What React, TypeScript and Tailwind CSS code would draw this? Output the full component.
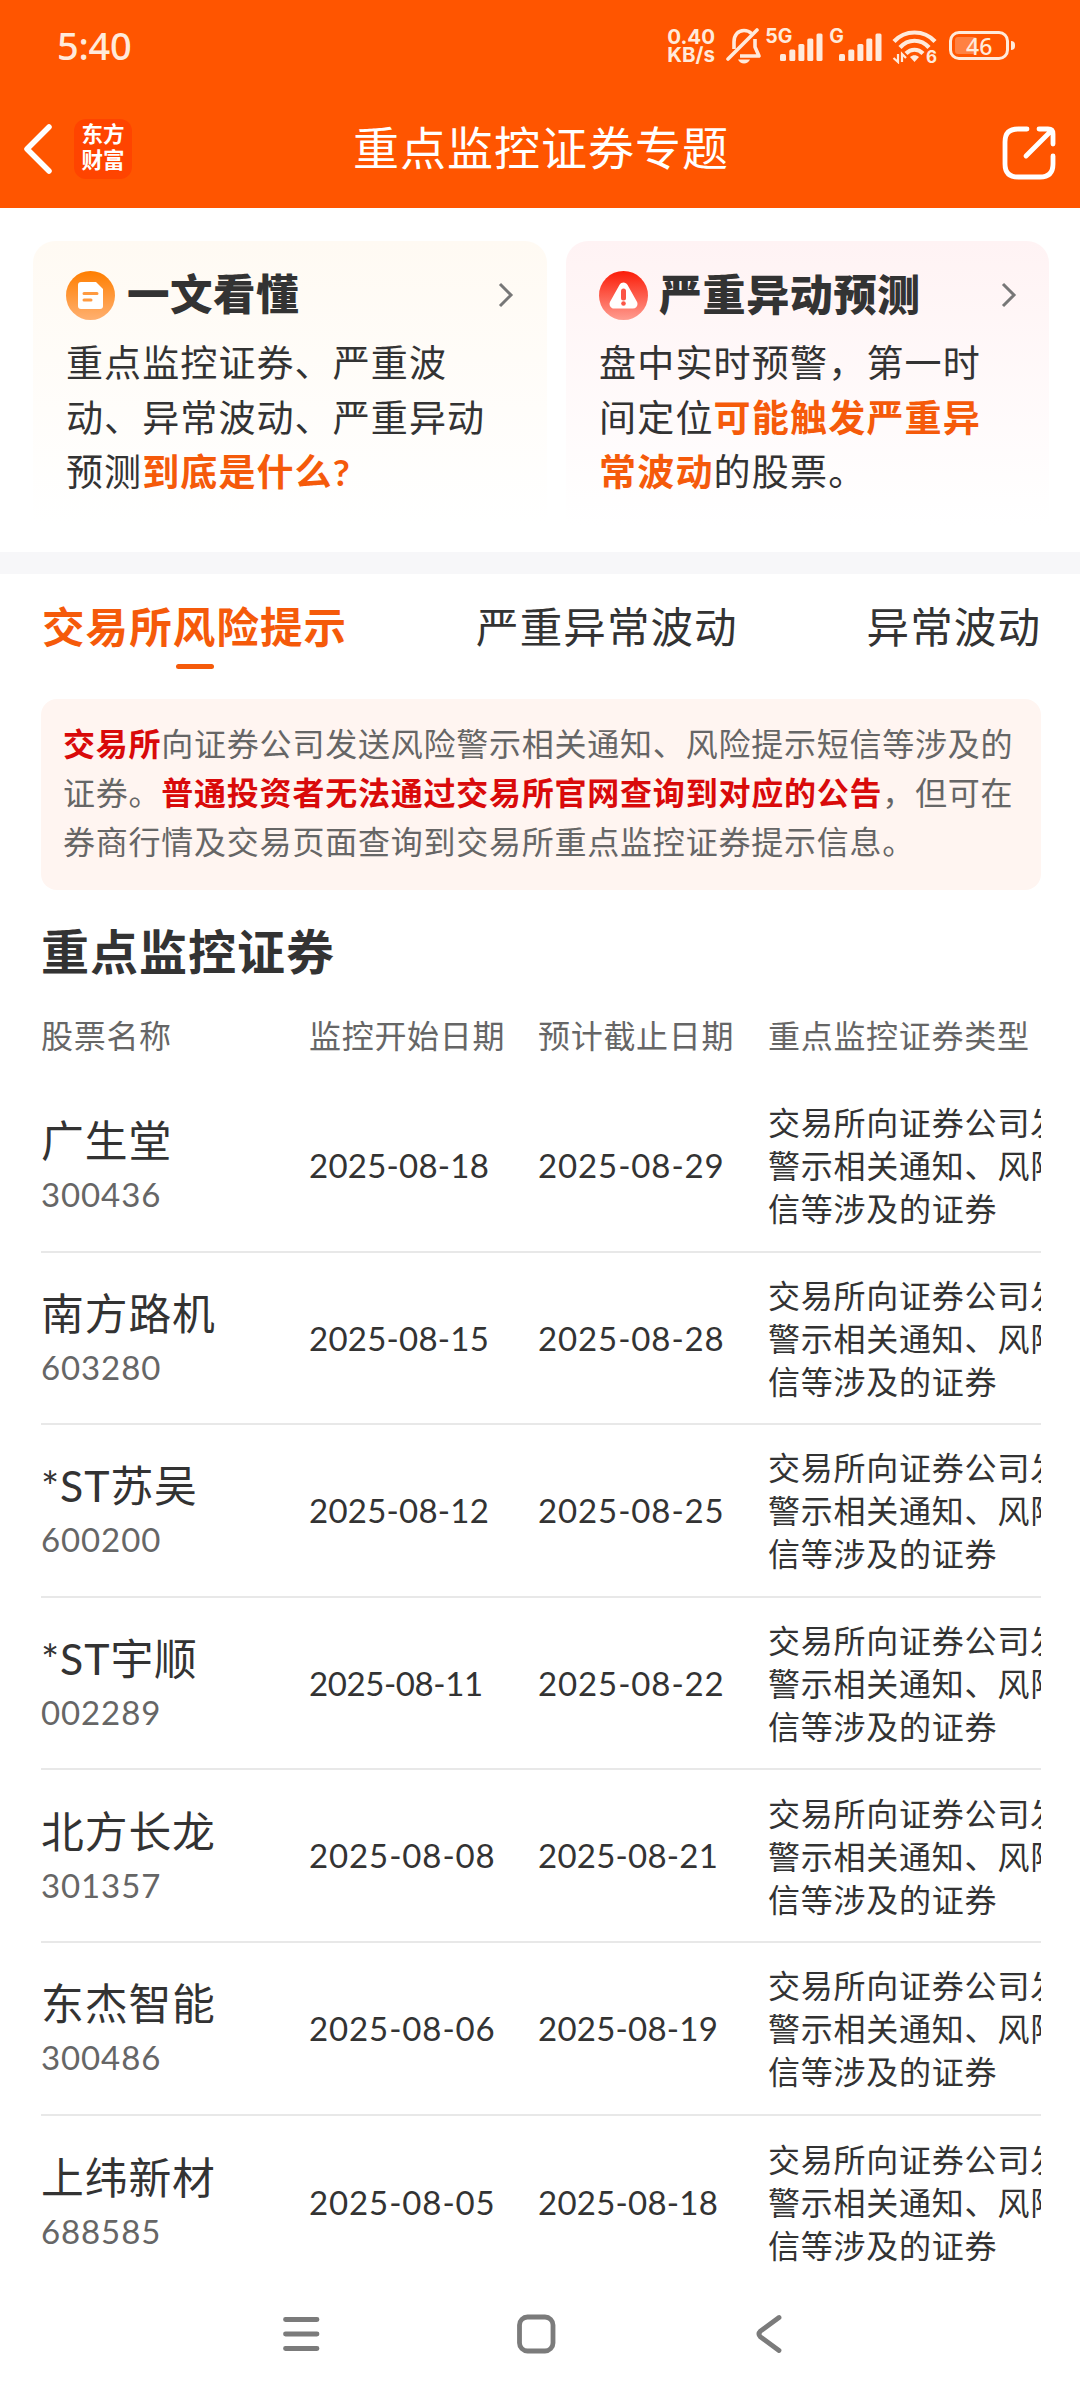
const LONG_TYPE = "交易所向证券公司发送风险警示相关通知、风险提示短信等涉及的证券";

const stocks = [
  { name: "广生堂", code: "300436", start: "2025-08-18", end: "2025-08-29" },
  { name: "南方路机", code: "603280", start: "2025-08-15", end: "2025-08-28" },
  { name: "*ST苏吴", code: "600200", start: "2025-08-12", end: "2025-08-25" },
  { name: "*ST宇顺", code: "002289", start: "2025-08-11", end: "2025-08-22" },
  { name: "北方长龙", code: "301357", start: "2025-08-08", end: "2025-08-21" },
  { name: "东杰智能", code: "300486", start: "2025-08-06", end: "2025-08-19" },
  { name: "上纬新材", code: "688585", start: "2025-08-05", end: "2025-08-18" },
];

const Signal = () => (
  <svg width="43" height="28" viewBox="0 0 43 28" fill="currentColor">
    <rect x="0" y="21" width="6" height="7" rx="1.5" />
    <rect x="9.3" y="16.5" width="6" height="11.5" rx="1.5" />
    <rect x="18.4" y="11" width="6" height="17" rx="1.5" />
    <rect x="27.3" y="5.5" width="6" height="22.5" rx="1.5" />
    <rect x="36.5" y="0.5" width="6" height="27.5" rx="1.5" />
  </svg>
);

const StatusBar = () => (
  <div className="flex h-[92px] items-center pl-[57px] pr-[65px] text-[#ffeadb]">
    <span className="-mt-[3px] font-['Noto_Sans',sans-serif] text-[38px] font-medium leading-none tracking-[-0.3px]">5:40</span>
    <div className="ml-auto flex h-[36px] items-start font-['Inter',sans-serif] font-bold">
      <div className="w-[51px] text-[20.500px] leading-[18px]">
        <p>0.40</p>
        <p>KB/s</p>
      </div>
      <svg width="36" height="36" viewBox="0 0 36 36" fill="none" stroke="currentColor" strokeWidth="3.6" className="ml-[8px]">
        <path d="M8 21V14C8 7 12 2.500 18 2.500c3 0 5.500 1 7.500 3M29 11v8l4 9H14" strokeLinejoin="round" />
        <path d="M2 31L31 2" strokeLinecap="round" />
        <path d="M12 31.500h12q-2 4-6 4t-6-4z" fill="currentColor" stroke="none" />
      </svg>
      <span className="ml-[3px] text-[19.500px] leading-[17px]">5G</span>
      <div className="-ml-[12px] mt-[5px]"><Signal /></div>
      <span className="ml-[6px] text-[19.500px] leading-[17px]">G</span>
      <div className="-ml-[5px] mt-[5px]"><Signal /></div>
      <svg width="45" height="36" viewBox="0 0 45 36" fill="none" stroke="currentColor" strokeWidth="4.200" className="ml-[10px]">
        <path d="M2 13.500C13 1.500 32 1.500 43 13.500M8 19.500c8-9 21-9 29 0M14 25.500c5-5 12-5 17 0" />
        <path d="M18 29c3-2.500 6-2.500 9 0L22.500 34z" fill="currentColor" stroke="none" />
        <path d="M6 26v8L1.500 30M10 34v-8l4 4" strokeWidth="2.200" />
        <text x="34" y="34.500" fontSize="17" fill="currentColor" stroke="none">6</text>
      </svg>
      <div className="ml-[12px] mt-[3px] flex items-center gap-[2px]">
        <div className="flex h-[29px] w-[60px] items-center rounded-[10px] border-[3px] border-current p-[3px]">
          <div className="h-full w-[22px] rounded-[3px] bg-[#ff8142]" />
          <span className="-ml-[11px] font-['Noto_Sans',sans-serif] text-[23px] font-medium leading-[24px]">46</span>
        </div>
        <div className="h-[9px] w-[4px] rounded-r-[4px] bg-current" />
      </div>
    </div>
  </div>
);

const Header = () => (
  <header className="h-[208px] shrink-0 bg-[#ff5500]">
    <StatusBar />
    <div className="flex h-[116px] items-center justify-between pb-[2px] pl-[23px] pr-[24px] text-white">
      <div className="flex w-[110px] items-center">
        <svg width="30" height="50" viewBox="0 0 30 50" fill="none" stroke="currentColor" strokeWidth="5.500">
          <path d="M26 3L4 25l22 22" strokeLinecap="round" strokeLinejoin="round" />
        </svg>
        <div className="ml-[21px] flex h-[60px] w-[58px] flex-col items-center rounded-[12px] bg-[#ff4400] pt-[3px] text-[21.500px] font-bold leading-[25.500px]">
          <span>东方</span>
          <span>财富</span>
        </div>
      </div>
      <h1 className="-mt-[3px] pl-[3px] text-[46px] leading-none tracking-[1px]">重点监控证券专题</h1>
      <div className="flex w-[110px] justify-end pt-[8px]">
        <svg width="54" height="54" viewBox="0 0 54 54" fill="none" stroke="currentColor" strokeWidth="4.800" strokeLinecap="round" strokeLinejoin="round">
          <path d="M25 3H16Q3 3 3 16v22q0 13 13 13h22q13 0 13-13V30" />
          <path d="M37 3h9q5 0 5 5v10M49 5L24 30" />
        </svg>
      </div>
    </div>
  </header>
);

const Chevron = () => (
  <svg width="16" height="26" viewBox="0 0 16 26" fill="none" stroke="#777" strokeWidth="3" className="ml-auto">
    <path d="M2 2l11 11L2 24" />
  </svg>
);

const Guides = () => (
  <section className="flex h-[344px] shrink-0 gap-[19px] pl-[33px] pr-[31px] pt-[33px] text-[#333]">
    <article className="h-[284px] w-[514px] rounded-t-[22px] bg-linear-to-b from-[#fffaf3] to-white pl-[33px] pt-[26px]">
      <div className="flex h-[56px] items-center pr-[33px]">
        <svg width="49" height="49" viewBox="0 0 49 49">
          <defs>
            <linearGradient id="docFill" x2="0" y2="1">
              <stop stopColor="#ff7e00" />
              <stop offset="1" stopColor="#ffb070" />
            </linearGradient>
          </defs>
          <circle cx="24.500" cy="24.500" r="24.500" fill="url(#docFill)" />
          <path d="M15 11h15l7 7v17q0 3-3 3H15q-3 0-3-3V14q0-3 3-3z" fill="#fff" />
          <path d="M18 22.500h13M18 29h7" stroke="#ff9a40" strokeWidth="3" strokeLinecap="round" />
        </svg>
        <h2 className="-mt-[2px] ml-[12px] text-[42.500px] font-black leading-none tracking-[0.5px]">一文看懂</h2>
        <Chevron />
      </div>
      <p className="mt-[13px] w-[440px] text-[37px] leading-[54.500px] tracking-[1.100px]">
        重点监控证券、严重波
        <br />
        动、异常波动、严重异动
        <br />
        预测<b className="text-[#f55a0a]">到底是什么?</b>
      </p>
    </article>
    <article className="h-[284px] w-[483px] rounded-t-[22px] bg-linear-to-b from-[#fff3f4] to-white pl-[33px] pt-[26px]">
      <div className="flex h-[56px] items-center pr-[32px]">
        <svg width="49" height="49" viewBox="0 0 49 49">
          <defs>
            <linearGradient id="warnFill" x2="0" y2="1">
              <stop stopColor="#fb1c08" />
              <stop offset="1" stopColor="#ff9c90" />
            </linearGradient>
          </defs>
          <circle cx="24.500" cy="24.500" r="24.500" fill="url(#warnFill)" />
          <path d="M24.500 16L15 33h19z" fill="#fff" stroke="#fff" strokeWidth="9" strokeLinejoin="round" />
          <path d="M24.500 20v7" stroke="#fb5546" strokeWidth="5" strokeLinecap="round" />
          <circle cx="24.500" cy="32.500" r="2.300" fill="#fb5546" />
        </svg>
        <h2 className="-mt-[2px] ml-[11px] text-[43px] font-black leading-none tracking-[0.600px]">严重异动预测</h2>
        <Chevron />
      </div>
      <p className="mt-[13px] w-[440px] text-[37px] leading-[54.500px] tracking-[1.200px]">
        盘中实时预警，第一时
        <br />
        间定位<b className="text-[#f55a0a]">可能触发严重异</b>
        <br />
        <b className="text-[#f55a0a]">常波动</b>的股票。
      </p>
    </article>
  </section>
);

const Tabs = () => (
  <nav className="flex h-[125px] shrink-0 justify-between pl-[42px] pr-[39px] pt-[25px] text-[42.500px] leading-[56px] tracking-[1.100px] text-[#333]">
    <div className="flex flex-col items-center">
      <span className="font-bold text-[#f55a0a]">交易所风险提示</span>
      <i className="mt-[9px] h-[5px] w-[38px] rounded-full bg-[#f55a0a]" />
    </div>
    <span>严重异常波动</span>
    <span>异常波动</span>
  </nav>
);

const Notice = () => (
  <p className="ml-[41px] mr-[39px] h-[191px] shrink-0 whitespace-nowrap rounded-[16px] bg-[#fff5f1] pl-[22px] pt-[20px] text-[32px] leading-[49px] tracking-[0.770px] text-[#666]">
    <b className="text-[#d90a0a]">交易所</b>向证券公司发送风险警示相关通知、风险提示短信等涉及的
    <br />
    证券。<b className="text-[#d90a0a]">普通投资者无法通过交易所官网查询到对应的公告</b>，但可在
    <br />
    券商行情及交易页面查询到交易所重点监控证券提示信息。
  </p>
);

const dateTracking = (date: string) => 0.9 - 0.65 * (date.split("1").length - 1);

const DateCell = ({ value }: { value: string }) => (
  <span style={{ letterSpacing: `${dateTracking(value)}px` }}>{value}</span>
);

const StockTable = () => (
  <section className="ml-[41px] mr-[39px] shrink-0 overflow-hidden text-[#333]">
    <h2 className="mt-[32px] text-[48px] font-bold leading-[60px] tracking-[1px]">重点监控证券</h2>
    <div className="mt-[29px] grid grid-cols-[268px_229px_230px_394px] text-[32px] leading-[50px] tracking-[0.700px] text-[#666]">
      <span>股票名称</span>
      <span>监控开始日期</span>
      <span>预计截止日期</span>
      <span>重点监控证券类型</span>
    </div>
    <div className="mt-[19px]">
      {stocks.map((stock) => (
        <div key={stock.code} className="grid h-[172.600px] grid-cols-[268px_229px_230px_396px] items-center border-b-2 border-[#e8e8e8] pt-px text-[33px] last:border-0">
          <div className="pt-px">
            <p className="text-[42.800px] leading-[57px] tracking-[0.900px]">{stock.name}</p>
            <p className="leading-[51px] tracking-[0.900px] text-[#666]">{stock.code}</p>
          </div>
          <DateCell value={stock.start} />
          <DateCell value={stock.end} />
          <p className="text-[32px] leading-[43px] tracking-[0.770px]">{LONG_TYPE}</p>
        </div>
      ))}
    </div>
  </section>
);

const SystemNav = () => (
  <footer className="flex h-[112px] shrink-0 items-start pl-[281px] pt-[24px] text-[#7b7b7b]">
    <svg width="40" height="44" viewBox="0 0 40 44" stroke="currentColor" strokeWidth="4.800" strokeLinecap="round">
      <path d="M4.500 7.500h31.500M4.500 22h31.500M4.500 36.500h31.500" />
    </svg>
    <svg width="44" height="44" viewBox="0 0 44 44" fill="none" stroke="currentColor" strokeWidth="4.800" className="ml-[194px]">
      <rect x="4.500" y="5" width="33.500" height="34" rx="8" />
    </svg>
    <svg width="30" height="44" viewBox="0 0 30 44" fill="none" stroke="currentColor" strokeWidth="4.800" className="ml-[196px]">
      <path d="M24 5.500L5.500 19q-3 3 0 6L24 38.500" strokeLinecap="round" />
    </svg>
  </footer>
);

const App = () => {
  return (
    <main className="flex h-[2400px] w-[1080px] flex-col overflow-hidden bg-white font-['Lato','Noto_Sans_CJK_SC',sans-serif]">
      <Header />
      <Guides />
      <div className="h-[22px] shrink-0 bg-[#f7f7f9]" />
      <Tabs />
      <Notice />
      <StockTable />
      <SystemNav />
    </main>
  );
};

export default App;
